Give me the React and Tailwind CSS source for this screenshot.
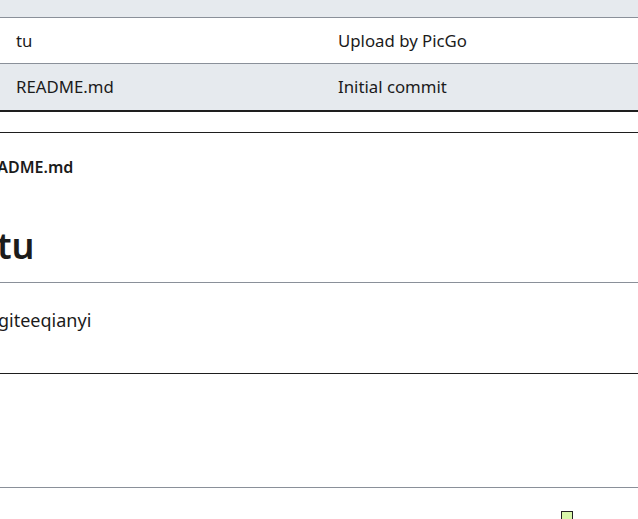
export default function App() {
  const rows = [
    { name: "tu", msg: "Upload by PicGo", bg: "bg-white" },
    { name: "README.md", msg: "Initial commit", bg: "bg-[#e6eaee]" },
  ];

  return (
    <div className="w-[638px] h-[519px] overflow-hidden bg-white text-[#1b1b1b] font-['Noto_Sans',sans-serif]">
      {/* file table */}
      <div className="h-[18px] bg-[#e6eaee] border-b border-[#8a9099]"></div>
      {rows.map((row, i) => (
        <div
          key={row.name}
          className={`flex items-center text-[16.8px] ${row.bg} ${i === 0 ? "h-[46px] border-b border-[#8a9099]" : "h-[48px] border-b-2 border-[#1e1e1e]"}`}
        >
          <div className="w-[338px] pl-4">{row.name}</div>
          <div>{row.msg}</div>
        </div>
      ))}

      <div className="h-[20px]"></div>

      {/* readme box */}
      <div className="border-t border-[#1e1e1e]">
        <div className="h-[68px] flex items-center">
          <span className="-ml-[22px] font-semibold text-[16px]">README.md</span>
        </div>
        <div className="h-[82px] border-b border-[#8a9099] pt-[16px]">
          <h1 className="text-[36px] font-semibold leading-[58px] -ml-[3px]">tu</h1>
        </div>
        <p className="pt-[24px] pb-[40px] text-[18px] -ml-[2px] leading-[26px]">giteeqianyi</p>
      </div>

      <div className="border-t border-[#1e1e1e] h-[114px]"></div>

      <div className="border-t border-[#8a9099] h-[40px] flex">
        <div className="ml-[561px] mt-[23px] w-[12px] h-[12px] bg-[#d8f7a9] border border-[#222]"></div>
      </div>
    </div>
  );
}
